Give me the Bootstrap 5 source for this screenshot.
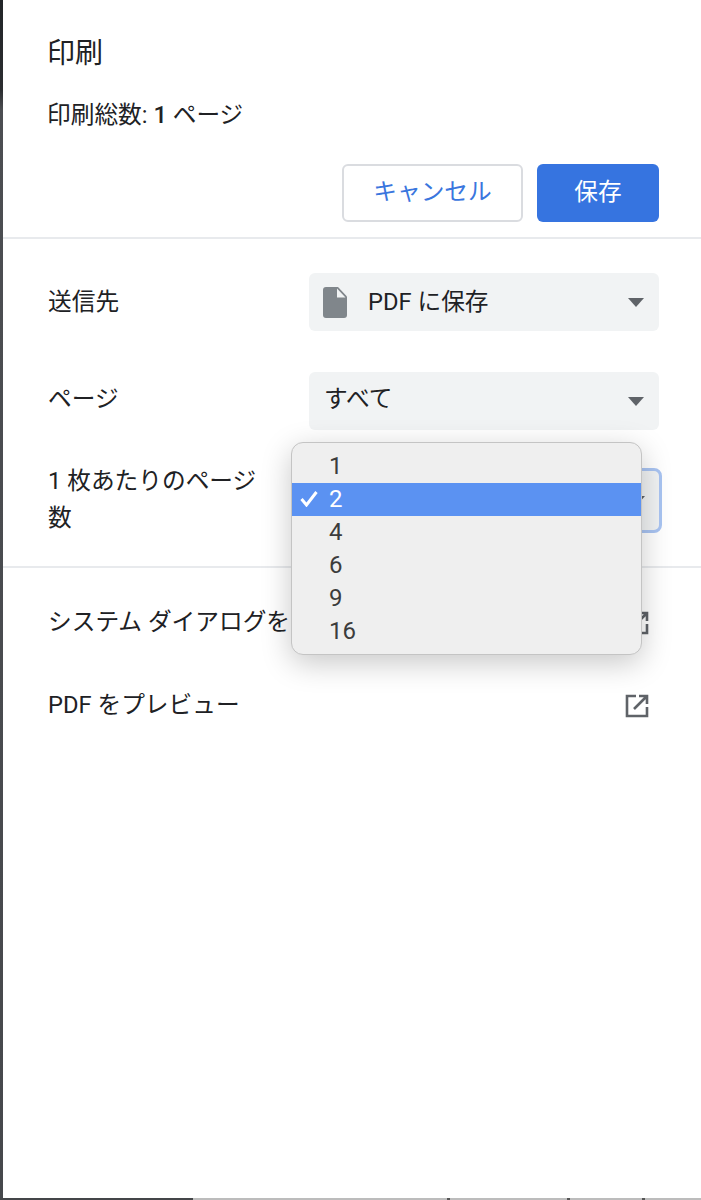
<!DOCTYPE html>
<html lang="ja">
<head>
<meta charset="utf-8">
<title>印刷</title>
<link rel="stylesheet" href="https://cdn.jsdelivr.net/npm/bootstrap@5.3.0/dist/css/bootstrap.min.css">
<style>
html, body { height: 1200px; overflow: hidden; }
body { font-family: Roboto, "Noto Sans CJK JP", sans-serif; color: #202124; background: #fff; font-size: 23.700px; line-height: 37px; }
.shell { height: 1198px; }
.edge { width: 3px; background: linear-gradient(#222528 0, #2b2d30 90px, #4c4e52 110px, #46484c 100%); flex: none; }
.sheet { position: relative; }
.head { padding: 33px 42px 0 45px; }
.ttl { font-size: 28px; line-height: 42px; margin: 0 0 0 -1px; font-weight: 400; }
.cnt { margin: 22px 0 0 -1px; }
.acts { margin-top: 30px; padding-bottom: 15px; gap: 14px; }
.bt { height: 58px; border-radius: 6px; font-size: 23.700px; line-height: 1; padding: 0; display: flex; align-items: center; justify-content: center; }
.bt-c { width: 181px; color: #3a76de; border: 2px solid #dadce0; background: #fff; }
.bt-s { width: 122px; color: #fff; background: #3674e0; border: 0; }
.rule { height: 2px; background: #e8eaed; margin: 0; }
.opts { padding: 34px 42px 29px 45px; }
.orow { align-items: center; }
.orow + .orow { margin-top: 41px; }
.orow.tall { margin-top: 33px; }
.lbl { width: 261px; padding-right: 40px; flex: none; }
.sel { flex: 1; height: 58px; background: #f1f3f4; border-radius: 6px; padding: 0 15px; position: relative; }
.sel.ring { height: 61px; outline: 3px solid #a9c4f2; outline-offset: -1px; margin-right: -1px; }
.lift { margin-bottom: 4px; }
.caret { width: 0; height: 0; border-left: 8.500px solid transparent; border-right: 8.500px solid transparent; border-top: 9px solid #5f6368; margin-left: auto; }
.fic { width: 24px; height: 31px; margin-left: -1px; margin-right: 21px; flex: none; }
.links { padding: 0 42px 0 45px; }
.lrow { height: 83px; align-items: center; justify-content: space-between; }
.lrow:first-child { margin-top: 13px; }
.cut { width: 242px; overflow: hidden; white-space: nowrap; flex: none; }
.ext { width: 24px; height: 24px; flex: none; margin-right: 10px; }
.pop { position: absolute; left: 288px; top: 442px; width: 351px; height: 213px; padding: 7px 0; background: #efefef; border-radius: 12px; border: 1px solid #c4c4c4; box-shadow: 0 8px 30px rgba(0,0,0,.22); color: #3c3c3c; font-size: 24px; z-index: 5; }
.opt { height: 33px; line-height: 32px; padding-left: 37px; position: relative; }
.opt.on { background: #5b92f2; color: #fff; }
.tick { position: absolute; left: 8px; top: 7px; width: 18px; height: 17px; }
.foot { height: 2px; }
.foot-a { width: 193px; background: #444649; flex: none; }
.foot-b { background: #bcbcbc; }
.tk { width: 3px; background: #555; flex: none; }
.sp1 { width: 254px; flex: none; }
.sp2 { width: 117px; flex: none; }
.sp3 { width: 72px; flex: none; }
</style>
</head>
<body>
<div class="shell d-flex">
  <div class="edge"></div>
  <div class="sheet flex-grow-1">
    <div class="head">
      <h1 class="ttl">印刷</h1>
      <p class="cnt">印刷総数: <b class="fw-medium">1</b> ページ</p>
      <div class="acts d-flex justify-content-end">
        <button type="button" class="btn bt bt-c">キャンセル</button>
        <button type="button" class="btn bt bt-s">保存</button>
      </div>
    </div>
    <div class="rule"></div>
    <div class="opts">
      <div class="orow d-flex">
        <div class="lbl">送信先</div>
        <div class="sel d-flex align-items-center">
          <svg class="fic" viewBox="0 0 24 31" aria-hidden="true"><path fill="#80868b" d="M3 0h12l9 9.500V28a3 3 0 0 1-3 3H3a3 3 0 0 1-3-3V3a3 3 0 0 1 3-3z"/><path fill="#f1f3f4" d="M14 1.500l8.500 9H14z"/></svg>
          <span>PDF に保存</span>
          <span class="caret"></span>
        </div>
      </div>
      <div class="orow d-flex">
        <div class="lbl lift">ページ</div>
        <div class="sel d-flex align-items-center">
          <span class="lift">すべて</span>
          <span class="caret"></span>
        </div>
      </div>
      <div class="orow tall d-flex">
        <div class="lbl">1 枚あたりのページ数</div>
        <div class="sel ring d-flex align-items-center">
          <span class="caret"></span>
        </div>
      </div>
    </div>
    <div class="rule"></div>
    <div class="links">
      <div class="lrow d-flex">
        <span class="cut">システム ダイアログを使用して印刷</span>
        <svg class="ext" viewBox="0 0 24 24" aria-hidden="true"><path fill="none" stroke="#5f6368" stroke-width="2.600" d="M11 2H2v20h20v-9M14 2h8v8M22 2L9 15"/></svg>
      </div>
      <div class="lrow d-flex">
        <span>PDF をプレビュー</span>
        <svg class="ext" viewBox="0 0 24 24" aria-hidden="true"><path fill="none" stroke="#5f6368" stroke-width="2.600" d="M11 2H2v20h20v-9M14 2h8v8M22 2L9 15"/></svg>
      </div>
    </div>
    <div class="pop">
      <div class="opt">1</div>
      <div class="opt on">
        <svg class="tick" viewBox="0 0 18 17" aria-hidden="true"><path fill="none" stroke="#fff" stroke-width="3" d="M1.500 9l5 6L16.500 2"/></svg>2
      </div>
      <div class="opt">4</div>
      <div class="opt">6</div>
      <div class="opt">9</div>
      <div class="opt">16</div>
    </div>
  </div>
</div>
<div class="d-flex foot">
  <div class="foot-a"></div>
  <div class="foot-b sp1"></div><div class="tk"></div>
  <div class="foot-b sp2"></div><div class="tk"></div>
  <div class="foot-b sp3"></div><div class="tk"></div>
  <div class="foot-b flex-grow-1"></div>
</div>
<script src="https://cdn.jsdelivr.net/npm/bootstrap@5.3.0/dist/js/bootstrap.bundle.min.js"></script>
</body>
</html>
